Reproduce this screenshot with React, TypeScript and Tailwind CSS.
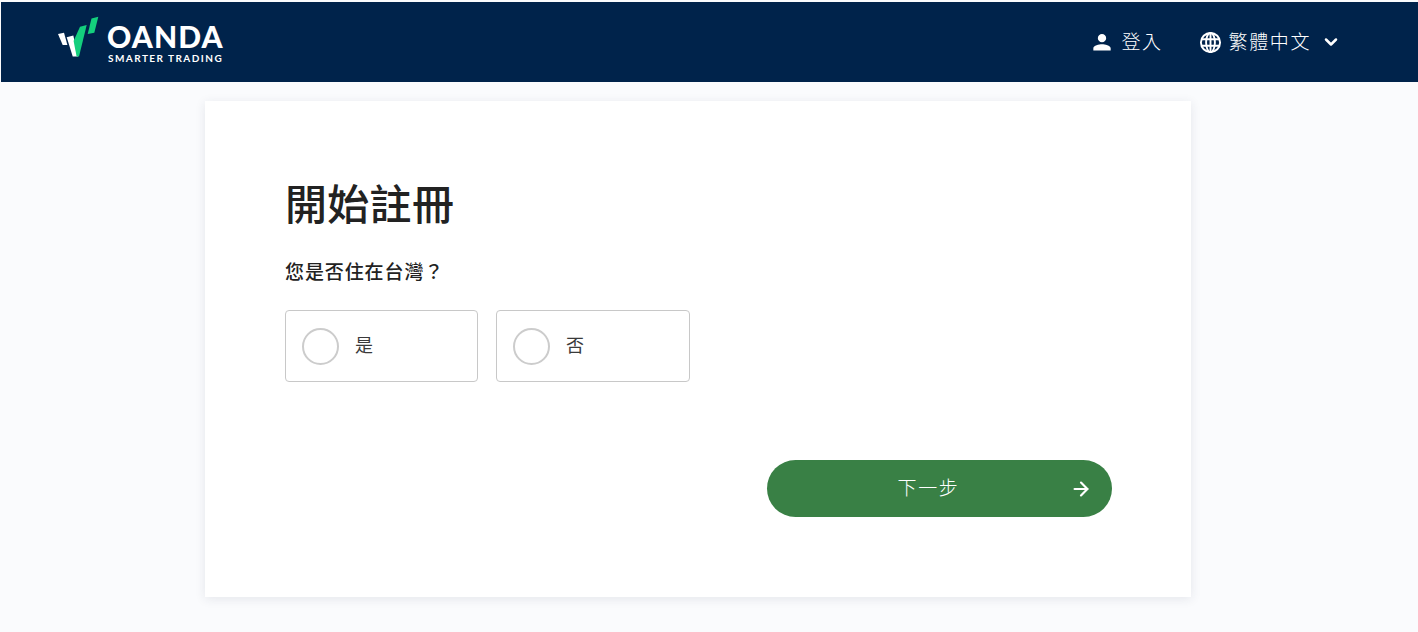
import { ArrowRight, ChevronDown } from 'lucide-react';

const cjk = 'font-["Noto_Sans_CJK_TC","Noto_Sans",sans-serif]';

function Logo() {
  return (
    <div className="flex items-center">
      <svg width="46" height="44" viewBox="58 15 46 44" className="mt-[-10px] shrink-0">
        <polygon points="58,34 64,32.8 67.4,45 62.7,45" fill="#ffffff" />
        <polygon points="66.7,37.3 73.3,35.6 78,56.5 72.7,56.5" fill="#ffffff" />
        <polygon points="80,26.7 86.7,25 79,56.5 76.6,56.5 73.6,41" fill="#14cf7d" />
        <polygon points="91.5,18.5 98.3,16.7 94.3,32.7 87.7,34" fill="#14cf7d" />
      </svg>
      <div className="ml-[3px] flex flex-col items-start text-white font-['Lato',sans-serif]">
        <span className="text-[30px] leading-[30px] font-black tracking-[1.1px]">OANDA</span>
        <span className="ml-[1px] mt-[1px] text-[10px] leading-[12px] font-bold tracking-[1.45px]">SMARTER TRADING</span>
      </div>
    </div>
  );
}

function RadioCard({ label, width }: { label: string; width: string }) {
  return (
    <label className={`flex h-[72px] items-center rounded-[4px] border border-[#c8c8c8] bg-white pl-4 ${width}`}>
      <span className="h-[37px] w-[37px] rounded-full border-2 border-[#cccccc]" />
      <span className="mb-[3px] ml-[16px] text-[18px] text-[#3a3a3a]">{label}</span>
    </label>
  );
}

export default function App() {
  return (
    <div className={`min-h-[632px] bg-[#fafbfd] pl-[1px] pt-[2px] ${cjk}`}>
      <header className="flex h-[80px] items-center justify-between bg-[#00234b] pl-[57px] pr-[77px] text-white">
        <Logo />
        <div className="mb-[1px] flex items-center text-[19px] font-light tracking-[1.6px]">
          <div className="flex items-center gap-[9px]">
            <svg width="20" height="20" viewBox="0 0 24 24" fill="#ffffff" className="mt-[1px]">
              <path d="M12 12.4a5 5 0 1 0 0-10 5 5 0 0 0 0 10zm0 2.3c-3.4 0-10.4 1.6-10.4 4.9v2.6h20.8v-2.6c0-3.3-7-4.9-10.4-4.9z" />
            </svg>
            <span>登入</span>
          </div>
          <div className="ml-[36px] flex items-center gap-[7px]">
            <svg width="23" height="23" viewBox="0 0 24 24" fill="none" stroke="#ffffff" strokeWidth="2" className="mt-[1px]">
              <circle cx="12" cy="12" r="10" />
              <ellipse cx="12" cy="12" rx="4.6" ry="10" />
              <path d="M12 2v20M2.8 8.6h18.4M2.8 15.4h18.4" />
            </svg>
            <span>繁體中文</span>
            <ChevronDown size={20} strokeWidth={3} className="ml-[3px] mt-[1px]" />
          </div>
        </div>
      </header>

      <main className="ml-[204px] mt-[19px] h-[496px] w-[986px] bg-white pl-[80px] pr-[79px] pt-[74px] shadow-[0_2px_10px_rgba(40,50,80,0.1)]">
        <h1 className="text-[42px] leading-[54px] font-medium tracking-[0.3px] text-[#222222]">開始註冊</h1>
        <p className="mt-[29px] text-[19px] leading-[26px] font-medium tracking-[0.9px] text-[#222222]">您是否住在台灣？</p>
        <div className="mt-[26px] flex gap-[18px]">
          <RadioCard label="是" width="w-[193px]" />
          <RadioCard label="否" width="w-[194px]" />
        </div>
        <div className="mt-[78px] flex justify-end">
          <button className="relative flex h-[57px] w-[345px] items-center justify-center rounded-full bg-[#398045] pb-[3px] pr-[22px] text-[19px] font-light tracking-[1.6px] text-white">
            下一步
            <ArrowRight size={22} strokeWidth={2.4} className="absolute right-[20px] top-[18px]" />
          </button>
        </div>
      </main>
    </div>
  );
}
